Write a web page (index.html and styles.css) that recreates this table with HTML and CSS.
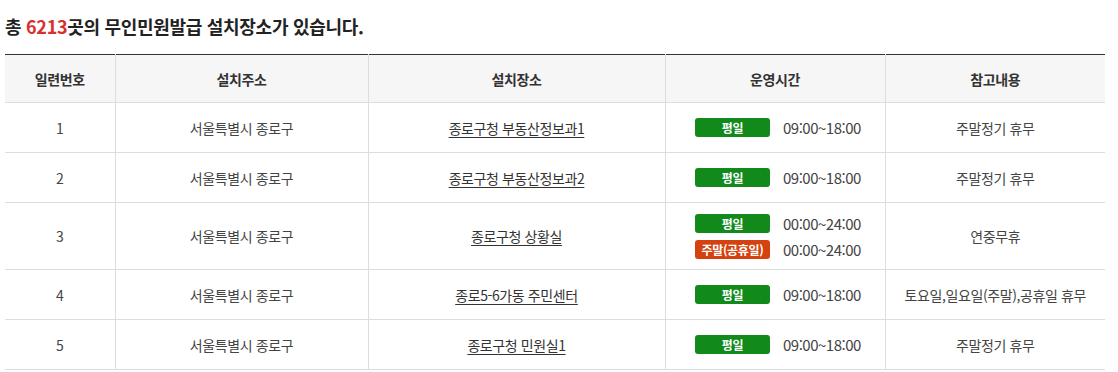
FILE: index.html
```html
<!DOCTYPE html>
<html lang="ko">
<head>
<meta charset="utf-8">
<link rel="stylesheet" href="styles.css">
</head>
<body>
<div class="wrap">
  <h2 class="total">총 <span class="num">6213</span>곳의 무인민원발급 설치장소가 있습니다.</h2>
  <table class="list">
    <colgroup>
      <col class="c1"><col class="c2"><col class="c3"><col class="c4"><col class="c5">
    </colgroup>
    <thead>
      <tr><th>일련번호</th><th>설치주소</th><th>설치장소</th><th>운영시간</th><th>참고내용</th></tr>
    </thead>
    <tbody>
      <tr>
        <td>1</td><td>서울특별시 종로구</td><td><a href="#">종로구청 부동산정보과1</a></td>
        <td><div class="times"><div class="time"><span class="badge green">평일</span><span class="hours">09:00~18:00</span></div></div></td>
        <td>주말정기 휴무</td>
      </tr>
      <tr>
        <td>2</td><td>서울특별시 종로구</td><td><a href="#">종로구청 부동산정보과2</a></td>
        <td><div class="times"><div class="time"><span class="badge green">평일</span><span class="hours">09:00~18:00</span></div></div></td>
        <td>주말정기 휴무</td>
      </tr>
      <tr class="tall">
        <td>3</td><td>서울특별시 종로구</td><td><a href="#">종로구청 상황실</a></td>
        <td><div class="times"><div class="time"><span class="badge green">평일</span><span class="hours">00:00~24:00</span></div><div class="time"><span class="badge red">주말(공휴일)</span><span class="hours">00:00~24:00</span></div></div></td>
        <td>연중무휴</td>
      </tr>
      <tr>
        <td>4</td><td>서울특별시 종로구</td><td><a href="#">종로5-6가동 주민센터</a></td>
        <td><div class="times"><div class="time"><span class="badge green">평일</span><span class="hours">09:00~18:00</span></div></div></td>
        <td>토요일,일요일(주말),공휴일 휴무</td>
      </tr>
      <tr>
        <td>5</td><td>서울특별시 종로구</td><td><a href="#">종로구청 민원실1</a></td>
        <td><div class="times"><div class="time"><span class="badge green">평일</span><span class="hours">09:00~18:00</span></div></div></td>
        <td>주말정기 휴무</td>
      </tr>
    </tbody>
  </table>
</div>
</body>
</html>
```

FILE: styles.css
```css
html, body {
  margin: 0;
  padding: 0;
  background: #fff;
}
body {
  font-family: "Noto Sans CJK KR", "Noto Sans", sans-serif;
  color: #333;
}
.wrap {
  padding: 0 13px 0 5px;
}
.total {
  margin: 0;
  padding-top: 13px;
  height: 54px;
  box-sizing: border-box;
  font-size: 18px;
  line-height: 26px;
  font-weight: 700;
  color: #222;
  letter-spacing: -0.3px;
}
.total .num {
  color: #d8302f;
}
.list {
  width: 1100px;
  border-collapse: collapse;
  table-layout: fixed;
  border-top: 1px solid #333;
  font-size: 14px;
  letter-spacing: -0.4px;
}
.c1 { width: 110px; }
.c2 { width: 253px; }
.c3 { width: 297px; }
.c4 { width: 220px; }
.c5 { width: 220px; }
.list th {
  height: 47px;
  padding: 0;
  background: #f6f6f6;
  font-weight: 700;
  color: #333;
  border-bottom: 1px solid #ddd;
  border-left: 1px solid #ddd;
}
.list td {
  height: 49px;
  padding: 0;
  text-align: center;
  border-bottom: 1px solid #ddd;
  border-left: 1px solid #ddd;
  color: #444;
}
.list th:first-child, .list td:first-child {
  border-left: 0;
}
.list tr.tall td {
  height: 66px;
}
.list a {
  color: #333;
  text-decoration: underline;
  text-underline-offset: 3px;
}
.times {
  display: flex;
  flex-direction: column;
  align-items: center;
  gap: 5px;
  padding-left: 10px;
}
.time {
  display: flex;
  align-items: center;
  gap: 13px;
}
.badge {
  width: 75px;
  height: 19px;
  border-radius: 3px;
  color: #fff;
  font-size: 12px;
  font-weight: 700;
  line-height: 19px;
  text-align: center;
  letter-spacing: -0.3px;
}
.badge.green { background: #128a1b; }
.badge.red { background: #d4420f; }
.hours {
  width: 82px;
  text-align: left;
  color: #444;
  font-size: 15px;
  letter-spacing: -0.5px;
}
```
